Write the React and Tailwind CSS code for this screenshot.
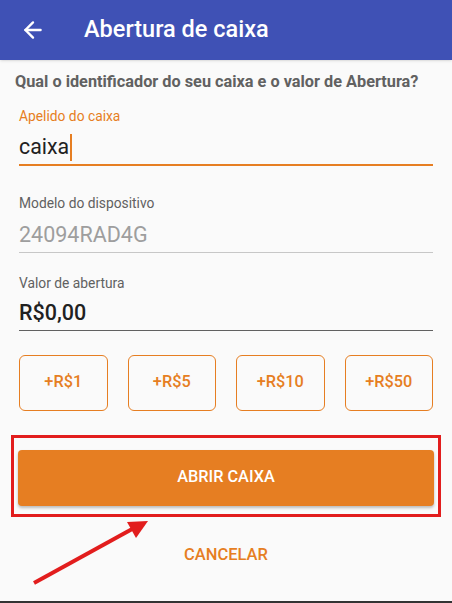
import { ArrowLeft } from 'lucide-react';

const amounts = ['+R$1', '+R$5', '+R$10', '+R$50'];

const App = () => {
  return (
    <div className="relative h-[603px] w-[452px] overflow-hidden bg-[#fafafa] font-['Roboto',sans-serif]">
      <header className="flex h-[60px] items-center bg-[#3f51b5] shadow-sm">
        <ArrowLeft className="ml-[20px] h-[26px] w-[26px] text-white" strokeWidth={2.2} />
        <h1 className="ml-[38px] text-[23.5px] font-medium text-white">Abertura de caixa</h1>
      </header>

      <p className="mt-[10px] ml-[15px] text-[16.3px] font-bold text-[#616161]">
        Qual o identificador do seu caixa e o valor de Abertura?
      </p>

      <div className="mx-[19px] mt-[12px]">
        <label className="block text-[13.8px] text-[#e67e22]">Apelido do caixa</label>
        <div className="flex h-[39px] items-end border-b-2 border-[#e67e22] pb-[7px]">
          <span className="text-[21.3px] leading-none text-[#212121]">caixa</span>
          <span className="ml-[1px] mb-[-4px] h-[27px] w-[2px] bg-[#e67e22]" />
        </div>

        <label className="mt-[27px] block text-[13.8px] text-[#616161]">Modelo do dispositivo</label>
        <div className="flex h-[39px] items-end border-b border-[#c7c7c7] pb-[6px]">
          <span className="text-[21.5px] leading-none text-[#9e9e9e]">24094RAD4G</span>
        </div>

        <label className="mt-[20px] block text-[13.8px] text-[#616161]">Valor de abertura</label>
        <div className="flex h-[37px] items-end border-b border-[#616161] pb-[6px]">
          <span className="text-[21.5px] font-medium leading-none text-[#212121]">R$0,00</span>
        </div>

        <div className="mt-[24px] grid grid-cols-4 gap-[20px]">
          {amounts.map((a) => (
            <button
              key={a}
              className="flex h-[56px] items-center justify-center rounded-[6px] border border-[#e67e22] text-[16.3px] font-medium text-[#e67e22]"
            >
              {a}
            </button>
          ))}
        </div>
      </div>

      <div className="mx-[11px] mt-[24px] border-[3px] border-[#e21d1d] px-[4px] pt-[12px] pb-[8px]">
        <button className="flex h-[56px] w-full items-center justify-center rounded-[4px] bg-[#e67e22] text-[16.3px] font-medium text-white shadow-[0_2px_3px_rgba(0,0,0,0.25)]">
          ABRIR CAIXA
        </button>
      </div>

      <div className="mt-[26px] text-center text-[16.5px] font-medium text-[#e67e22]">CANCELAR</div>

      <svg className="absolute left-0 top-[510px]" width="170" height="90" viewBox="0 510 170 90">
        <line x1="34" y1="583" x2="134" y2="528" stroke="#e21d1d" strokeWidth="4" />
        <polygon points="127,522 148,521 136,538" fill="#e21d1d" />
      </svg>

      <div className="absolute bottom-0 left-0 h-[2px] w-full bg-[#333]" />
    </div>
  );
};

export default App;
